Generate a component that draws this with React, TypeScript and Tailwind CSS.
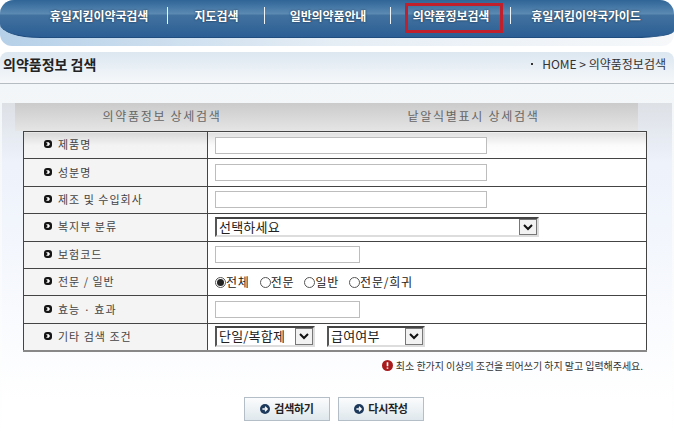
import type { ReactNode } from "react";

const NAV = [
  { label: "휴일지킴이약국검색", width: "w-[138px]" },
  { label: "지도검색", width: "w-[97px]" },
  { label: "일반의약품안내", width: "w-[126px]" },
  { label: "의약품정보검색", width: "w-[120px]", active: true },
  { label: "휴일지킴이약국가이드", width: "w-[150px]" },
];

function Bullet() {
  return (
    <svg viewBox="0 0 8 8" className="h-[8px] w-[8px] shrink-0">
      <rect x="0" y="0" width="8" height="8" rx="3" fill="#151515" />
      <path d="M2 2.3h2.8L6 4 4.8 5.7H2L3.8 4z" fill="#fff" />
    </svg>
  );
}

function Chevron() {
  return (
    <span className="flex h-full w-[18px] shrink-0 items-center justify-center border border-[#777] bg-[#f2f2f2]">
      <svg viewBox="0 0 10 7" className="h-[7px] w-[10px]">
        <path d="M1 1l4 4 4-4" fill="none" stroke="#111" strokeWidth="2" />
      </svg>
    </span>
  );
}

function Select({ label, width, height }: { label: string; width: string; height: string }) {
  return (
    <div
      className={`flex ${width} ${height} items-stretch justify-between border-2 border-b-[#ddd] border-l-[#555] border-r-[#ddd] border-t-[#444] bg-white`}
    >
      <span className="pl-[2px] text-[13px] leading-[15px] tracking-[0.2px] text-[#222]">{label}</span>
      <Chevron />
    </div>
  );
}

function Field({ width, height = "h-[17px]" }: { width: string; height?: string }) {
  return <input type="text" className={`${width} ${height} block border border-[#bdbdbd] bg-white`} />;
}

function Radio({ label, checked }: { label: string; checked?: boolean }) {
  return (
    <label className="flex items-center text-[12px] leading-[14px] tracking-[0.8px] text-[#222]">
      <span className="flex h-[11px] w-[11px] items-center justify-center rounded-full border border-[#555] bg-white">
        {checked && <span className="h-[7px] w-[7px] rounded-full bg-[#222]" />}
      </span>
      {label}
    </label>
  );
}

function Row({ label, children, first }: { label: string; children: ReactNode; first?: boolean }) {
  return (
    <tr className="h-[27.4px]">
      <td
        className={`w-[184px] border border-[#444] pl-[20px] align-middle ${
          first ? "bg-gradient-to-b from-[#d8d8d8] via-[#f3f3f3] to-[#f4f4f4]" : "bg-[#f4f4f4]"
        }`}
      >
        <span className="flex items-center gap-[6px] pb-[2px] text-[11px] leading-[14px] tracking-[1px] text-[#444]">
          <Bullet />
          {label}
        </span>
      </td>
      <td
        className={`border border-[#444] pl-[7px] align-middle ${
          first ? "bg-gradient-to-b from-[#e0e0e0] via-[#fbfbfb] to-white" : "bg-white"
        }`}
      >
        {children}
      </td>
    </tr>
  );
}

function CircleArrow() {
  return (
    <svg viewBox="0 0 10 10" className="h-[10px] w-[10px] shrink-0">
      <circle cx="5" cy="5" r="5" fill="#1d3a5c" />
      <path d="M2.4 5h4.6M5 2.8L7.2 5 5 7.2" fill="none" stroke="#fff" strokeWidth="1.3" />
    </svg>
  );
}

function ActionButton({ label }: { label: string }) {
  return (
    <button
      type="button"
      className="flex h-[24px] w-[86px] items-center justify-center gap-[4px] border border-[#b4bec6] bg-gradient-to-b from-[#fbfcfd] to-[#dfe8ed] text-[11px] font-bold tracking-[-0.3px] text-[#222]"
    >
      <CircleArrow />
      {label}
    </button>
  );
}

export default function App() {
  return (
    <div
      className="flex h-[433px] w-[674px] flex-col overflow-hidden bg-white"
      style={{ fontFamily: '"Noto Sans CJK KR", "Noto Sans", sans-serif' }}
    >
      {/* Top nav */}
      <div className="h-[46px] shrink-0 rounded-t-[14px] rounded-b-[12px] bg-gradient-to-r from-[#b5d0e8] via-[#e6eef5] to-[#f6f8fa]">
        <nav className="flex h-[38px] rounded-t-[14px] rounded-bl-[40px_14px] rounded-br-[40px_7px] border-b border-[#1f4d7e] bg-[linear-gradient(#2f6597,#5c8ab3_14px,#42729f_15px,#2b5e94)] pl-[30px]">
          {NAV.map((item, i) => (
            <div key={item.label} className={`relative flex ${item.width} items-start justify-center pt-[7px]`}>
              <span className="text-[12px] font-bold leading-[17px] tracking-[-0.1px] text-white [text-shadow:0_0_2px_#123]">
                {item.label}
              </span>
              {i < NAV.length - 1 && (
                <span className="absolute right-0 top-[7px] h-[17px] w-[1px] bg-[#eef3f8]" />
              )}
              {item.active && (
                <span className="absolute left-[14px] top-[3px] h-[30px] w-[98px] border-[3px] border-[#c0202c]" />
              )}
            </div>
          ))}
        </nav>
      </div>

      {/* Page title */}
      <div className="mt-[6px] flex h-[32px] shrink-0 items-start justify-between rounded-t-[8px] border-b border-[#b5bdc2] bg-gradient-to-b from-[#dce7f0] to-[#f6f8fa] pl-[3px] pr-[8px] pt-[3px]">
        <h1 className="text-[14px] font-bold leading-[18px] text-[#222]">의약품정보 검색</h1>
        <span className="flex items-center gap-[4px] text-[12px] leading-[18px] text-[#333]">
          <span className="mr-[5px] h-[2px] w-[2px] bg-[#333]" />
          HOME &gt; 의약품정보검색
        </span>
      </div>

      {/* Search panel */}
      <div className="flex flex-1 flex-col bg-gradient-to-b from-[#f3f6f8] to-white pt-[19px]">
        <div className="mx-[2px] flex-1 bg-gradient-to-b from-[#dde0e5] from-0% via-[#edf2fb] via-[18%] to-white to-[90%]">
          <div className="ml-[13px] flex h-[28px] w-[623px] items-center bg-gradient-to-b from-[#cbcbcb] to-[#e5e5e5] pb-[3px] text-[12px] tracking-[1.7px] text-[#666]">
            <span className="w-[294px] text-center">의약품정보 상세검색</span>
            <span className="w-[329px] text-center">낱알식별표시 상세검색</span>
          </div>
          <table className="ml-[21px] w-[624px] table-fixed border-collapse border-b-2 border-b-[#888] bg-white">
            <tbody>
              <Row label="제품명" first>
                <Field width="w-[272px]" />
              </Row>
              <Row label="성분명">
                <Field width="w-[272px]" />
              </Row>
              <Row label="제조 및 수입회사">
                <Field width="w-[272px]" />
              </Row>
              <Row label="복지부 분류">
                <Select label="선택하세요" width="w-[324px]" height="h-[20px]" />
              </Row>
              <Row label="보험코드">
                <Field width="w-[145px]" />
              </Row>
              <Row label="전문 / 일반">
                <div className="flex gap-[10px]">
                  <Radio label="전체" checked />
                  <Radio label="전문" />
                  <Radio label="일반" />
                  <Radio label="전문/희귀" />
                </div>
              </Row>
              <Row label="효능 · 효과">
                <Field width="w-[145px]" />
              </Row>
              <Row label="기타 검색 조건">
                <div className="flex gap-[12px]">
                  <Select label="단일/복합제" width="w-[100px]" height="h-[21px]" />
                  <Select label="급여여부" width="w-[98px]" height="h-[21px]" />
                </div>
              </Row>
            </tbody>
          </table>

          {/* Notice */}
          <p className="mt-[7px] flex items-center justify-end gap-[3px] pr-[29px] text-[10px] leading-[14px] tracking-[-0.04px] text-[#333]">
            <svg viewBox="0 0 10 10" className="h-[11px] w-[11px] shrink-0">
              <circle cx="5" cy="5" r="5" fill="#a81a1c" />
              <path d="M5 2v3.6M5 6.8v1.2" stroke="#fff" strokeWidth="1.5" />
            </svg>
            최소 한가지 이상의 조건을 띄어쓰기 하지 말고 입력해주세요.
          </p>
          <div className="ml-[242px] mt-[24px] flex gap-[8px]">
            <ActionButton label="검색하기" />
            <ActionButton label="다시작성" />
          </div>
        </div>
      </div>
    </div>
  );
}
